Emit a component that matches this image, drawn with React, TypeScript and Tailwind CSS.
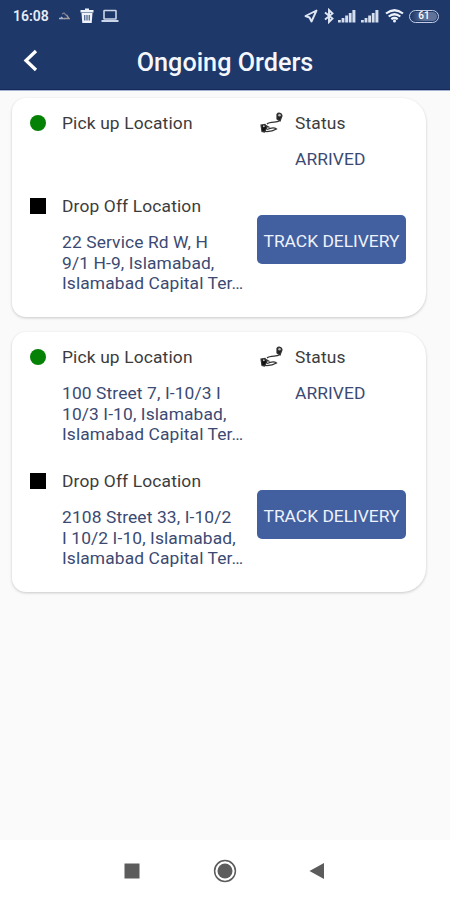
import React from 'react';

type Order = {
  id: number;
  pickup: string[];
  dropoff: string[];
  status: string;
};

const ORDERS: Order[] = [
  {
    id: 1,
    pickup: [],
    dropoff: ['22 Service Rd W, H', '9/1 H-9, Islamabad,', 'Islamabad Capital Ter…'],
    status: 'ARRIVED',
  },
  {
    id: 2,
    pickup: ['100 Street 7, I-10/3 I', '10/3 I-10, Islamabad,', 'Islamabad Capital Ter…'],
    dropoff: ['2108 Street 33, I-10/2', 'I 10/2 I-10, Islamabad,', 'Islamabad Capital Ter…'],
    status: 'ARRIVED',
  },
];

function SignalIcon() {
  return (
    <svg width="18" height="14" viewBox="0 0 18 14" fill="#d5deee">
      <rect x="0" y="11" width="2.8" height="2.5" />
      <rect x="3.6" y="9" width="2.8" height="4.5" />
      <rect x="7.2" y="6.5" width="2.8" height="7" />
      <rect x="10.8" y="4" width="2.8" height="9.5" />
      <rect x="14.4" y="1" width="3" height="12.5" />
    </svg>
  );
}

function StatusBar() {
  return (
    <div className="flex h-8 items-center pl-[13px] pr-[11px] text-[#e6ecf6]">
      <span className="w-[44px] text-[14px] font-semibold leading-none">16:08</span>
      <svg className="ml-[1px]" width="12" height="10" viewBox="0 0 12 10" fill="none" strokeWidth="1.3">
        <path d="M1 7.5h4l-2-1.5" stroke="#aab3c8" />
        <path d="M4 3l2-1 2.5 2.5" stroke="#7f7f92" />
        <path d="M6 7.5h5L8.5 4" stroke="#a39b9f" />
      </svg>
      <svg className="ml-[10px]" width="14" height="16" viewBox="0 0 14 16" fill="#eef2fa">
        <path fillRule="evenodd" d="M5 .5h4V2h4.500v2.500H.5V2H5zM1.500 5h11l-.8 10H2.300zM4.300 7v5.500h1V7zM6.500 7v5.500h1V7zM8.700 7v5.500h1V7z" />
      </svg>
      <svg className="ml-[7px]" width="18" height="14" viewBox="0 0 18 14" fill="none" stroke="#cbd6ea" strokeWidth="1.6">
        <rect x="3" y="1.5" width="12" height="8.5" rx="0.5" />
        <path d="M.5 12h17" strokeWidth="2" />
      </svg>
      <div className="ml-auto flex items-center">
        <svg width="14" height="14" viewBox="0 0 14 14" fill="none" stroke="#dfe6f3" strokeWidth="1.9" strokeLinejoin="round">
          <path d="M12.500 1.500 1.500 7l4 1.500L7.500 12.500z" />
        </svg>
        <svg className="ml-[6px]" width="10" height="16" viewBox="0 0 10 16" fill="none" stroke="#dfe6f3" strokeWidth="1.9">
          <path d="M1 4.500l7.500 6L5 14V2l3.500 3.500L1 11.500" />
        </svg>
        <span className="ml-[4px]"><SignalIcon /></span>
        <span className="ml-[5px]"><SignalIcon /></span>
        <svg className="ml-[6px]" width="19" height="14" viewBox="0 0 19 14" fill="none" stroke="#eef2fa" strokeWidth="2.2">
          <path d="M1 4.500Q9.500-2 18 4.500M3.700 7.500Q9.500 3 15.300 7.500M6.300 10.200Q9.500 7.800 12.700 10.200" />
          <circle cx="9.5" cy="12" r="1.5" fill="#eef2fa" stroke="none" />
        </svg>
        <div className="ml-[5px] flex h-[13px] w-[30px] items-center justify-center rounded-full border-[1.5px] border-[#c3cee4] p-px">
          <span className="flex h-full w-full items-center justify-center rounded-full bg-gradient-to-r from-[#1f3868] via-[#5f7299] to-[#5f7299] text-[10px] font-medium leading-none text-white">
            61
          </span>
        </div>
      </div>
    </div>
  );
}

function Header() {
  return (
    <header className="h-[90px] shrink-0 border-b border-[#15295a] bg-[#1e3869]">
      <StatusBar />
      <div className="grid h-[58px] grid-cols-[60px_1fr_60px] items-center">
        <svg className="ml-[23px]" width="16" height="24" viewBox="0 0 16 24" fill="none" stroke="#fff" strokeWidth="3.3">
          <path d="M13 2 3 11.500 13 21" />
        </svg>
        <h1 className="whitespace-nowrap pt-[3px] text-center text-[25.2px] font-medium leading-none text-[#f4f7fd]">
          Ongoing Orders
        </h1>
      </div>
    </header>
  );
}

function RouteIcon() {
  return (
    <svg width="24" height="22" viewBox="0 0 24 22" fill="none" stroke="#333" strokeWidth="1.2">
      <path d="M19 9C17 11 10 9 7 12M5 19.500c4 .3 8-.3 11.500-2.500-2-1.500-5-1.500-9.500.5" />
      <path d="M6 13.500l3.500 2" />
      <path d="M17 2.300a2.800 2.800 0 0 1 5 1.500L20 9 17 7z" fill="#222" />
      <path d="M1 13l4-.5 2 3L4.500 20 2 19.500z" fill="#111" />
      <circle cx="19.5" cy="3.2" r="1.3" fill="#bbb" stroke="none" />
      <circle cx="3.8" cy="14.2" r="1" fill="#bbb" stroke="none" />
    </svg>
  );
}

function Address({ lines }: { lines: string[] }) {
  return (
    <p className="min-h-[20.6px] whitespace-nowrap pl-8 text-[17.4px] leading-[20.6px] tracking-[0.11px] text-[#3b4a72]">
      {lines.map((line, idx) => (
        <span key={idx} className="block">{line}</span>
      ))}
    </p>
  );
}

function OrderCard({ order }: { order: Order }) {
  const label = 'text-[17.4px] leading-5 tracking-[0.14px] text-[#3c3c3c]';
  return (
    <article className="flex rounded-l-[14px] rounded-r-[24px] bg-white pl-[18px] pr-5 pt-[15px] shadow-[0_1px_3px_rgba(0,0,0,0.2)]">
      <div className="w-[227px] pb-[23px]">
        <div className="flex items-center">
          <span className="size-4 rounded-full bg-[#058205]" />
          <span className={`ml-4 ${label}`}>Pick up Location</span>
        </div>
        <div className="mt-4"><Address lines={order.pickup} /></div>
        <div className="mt-[26px] flex items-center">
          <span className="size-4 bg-black" />
          <span className={`ml-4 ${label}`}>Drop Off Location</span>
        </div>
        <div className="mt-4"><Address lines={order.dropoff} /></div>
      </div>

      <div className="flex w-[149px] flex-col">
        <div className="flex h-5 items-center pl-[3px]">
          <RouteIcon />
          <span className={`ml-[11px] ${label}`}>Status</span>
        </div>
        <p className="mt-4 pl-[38px] text-[17.4px] leading-[20.6px] tracking-[0.09px] text-[#3b4a72]">{order.status}</p>
        <button className="mb-[52.5px] mt-auto h-[49px] whitespace-nowrap rounded-[5px] bg-[#42609f] pt-[3px] text-[17.4px] leading-none text-[#eef2fb]">
          TRACK DELIVERY
        </button>
      </div>
    </article>
  );
}

function NavBar() {
  return (
    <nav className="flex h-[60px] shrink-0 items-center justify-between bg-white pl-[124px] pr-[125px] pt-px">
      <svg width="16" height="16" viewBox="0 0 16 16" fill="#5c5c5c">
        <rect x="0.5" y="0.5" width="15" height="15" />
      </svg>
      <svg width="24" height="24" viewBox="0 0 24 24">
        <circle cx="12" cy="12" r="10.4" fill="none" stroke="#5c5c5c" strokeWidth="1.5" />
        <circle cx="12" cy="12" r="7.5" fill="#5c5c5c" />
      </svg>
      <svg width="16" height="18" viewBox="0 0 16 18" fill="#5c5c5c">
        <path d="M15 1v16L.5 9z" />
      </svg>
    </nav>
  );
}

export default function App() {
  return (
    <div className="flex h-[900px] w-[450px] flex-col overflow-hidden bg-[#fafafa] font-['Roboto',sans-serif]">
      <Header />
      <main className="flex flex-1 flex-col gap-[15.4px] border-t border-[#a3b1d3] pl-3 pr-6 pt-[7.4px]">
        {ORDERS.map((order) => (
          <OrderCard key={order.id} order={order} />
        ))}
      </main>
      <NavBar />
    </div>
  );
}
